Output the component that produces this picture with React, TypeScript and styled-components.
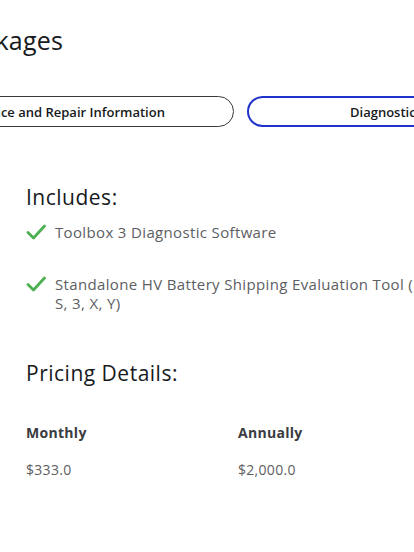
import React from "react";
import styled, { createGlobalStyle } from "styled-components";

const GlobalStyle = createGlobalStyle`
  html, body {
    margin: 0;
    padding: 0;
    background: #fff;
    overflow: hidden;
  }
  body {
    font-family: "Open Sans", "Liberation Sans", sans-serif;
    color: #171a20;
  }
`;

const Page = styled.div`
  width: 600px;
  height: 552px;
  overflow: hidden;
`;

const Title = styled.h1`
  margin: 26px 0 0 -46px;
  font-size: 25px;
  font-weight: 500;
  line-height: 28px;
  letter-spacing: 0.2px;
  white-space: nowrap;
`;

const Tabs = styled.div`
  display: flex;
  gap: 13px;
  margin: 42px 0 0 -99px;
`;

const Tab = styled.button<{ $active?: boolean }>`
  flex-shrink: 0;
  width: 333px;
  height: 31px;
  box-sizing: border-box;
  border-radius: 16px;
  background: #fff;
  border: ${(p) => (p.$active ? "2px solid #1f33cc" : "1px solid #3a3a3a")};
  font-family: inherit;
  font-size: 13px;
  font-weight: 600;
  color: #171a20;
  white-space: nowrap;
  padding: 0;
`;

const Section = styled.section<{ $top: number }>`
  width: 500px;
  box-sizing: border-box;
  padding: 0 26px;
  margin-top: ${(p) => p.$top}px;
`;

const Heading = styled.h2`
  margin: 0;
  font-size: 21px;
  font-weight: 500;
  line-height: 24px;
  letter-spacing: 0.5px;
`;

const List = styled.ul`
  list-style: none;
  margin: 14px 0 0;
  padding: 0;
  display: flex;
  flex-direction: column;
  gap: 33px;
`;

const Item = styled.li`
  display: flex;
  gap: 9px;
  font-size: 15px;
  line-height: 19px;
  letter-spacing: 0.35px;
  color: #5c5e62;
`;

const Check = styled.svg`
  flex-shrink: 0;
  width: 20px;
  height: 16px;
  margin-top: 1px;
`;

const PriceGrid = styled.div`
  display: grid;
  grid-template-columns: 212px 1fr;
  row-gap: 19px;
  margin-top: 39px;
  font-size: 14px;
  line-height: 18px;
  letter-spacing: 0.3px;
`;

const PriceLabel = styled.div`
  font-weight: 700;
  color: #393c41;
`;

const PriceValue = styled.div`
  color: #5c5e62;
`;

function CheckIcon() {
  return (
    <Check viewBox="0 0 20 16">
      <path d="M2 8.5 L7.5 14 L18.5 2" fill="none" stroke="#4caf50" strokeWidth="2.8" strokeLinecap="round" strokeLinejoin="round" />
    </Check>
  );
}

const includes = [
  "Toolbox 3 Diagnostic Software",
  "Standalone HV Battery Shipping Evaluation Tool (Model S, 3, X, Y)",
];

export default function App() {
  return (
    <Page>
      <GlobalStyle />
      <Title>Packages</Title>
      <Tabs>
        <Tab>Service and Repair Information</Tab>
        <Tab $active>Diagnostic Packages</Tab>
      </Tabs>
      <Section $top={58}>
        <Heading>Includes:</Heading>
        <List>
          {includes.map((text) => (
            <Item key={text}>
              <CheckIcon />
              <span>{text}</span>
            </Item>
          ))}
        </List>
      </Section>
      <Section $top={48}>
        <Heading>Pricing Details:</Heading>
        <PriceGrid>
          <PriceLabel>Monthly</PriceLabel>
          <PriceLabel>Annually</PriceLabel>
          <PriceValue>$333.0</PriceValue>
          <PriceValue>$2,000.0</PriceValue>
        </PriceGrid>
      </Section>
    </Page>
  );
}
